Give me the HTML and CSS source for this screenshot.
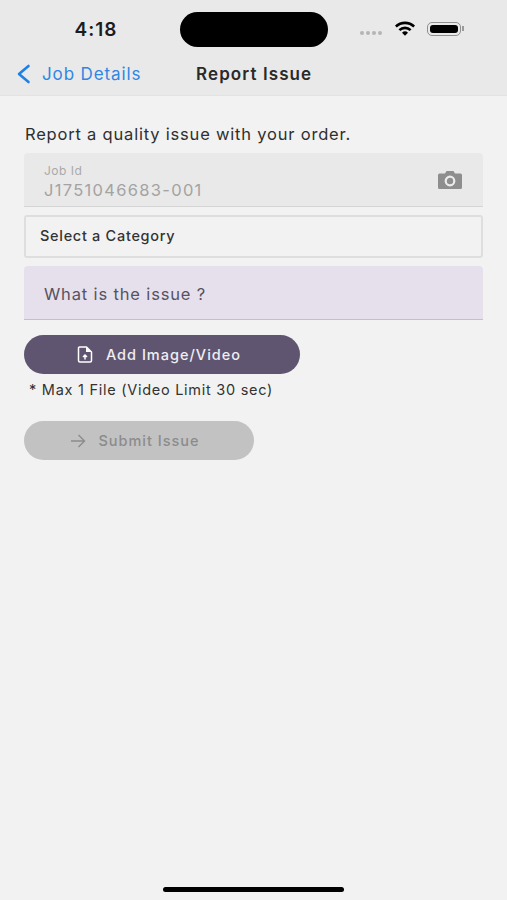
FILE: index.html
```html
<!DOCTYPE html>
<html lang="en">
<head>
    <meta charset="UTF-8">
    <meta name="viewport" content="width=device-width, initial-scale=1.0">
    <title>Report Issue</title>
    <link rel="stylesheet" href="styles.css">
</head>
<body>
    <div class="page">
        <header class="top-bar">
            <div class="status-bar">
                <div class="status-time">4:18</div>
                <div class="island"></div>
                <div class="status-icons">
                    <div class="signal"><span></span><span></span><span></span><span></span></div>
                    <svg class="wifi" width="22" height="16" viewBox="0 0 22 16">
                        <path d="M1 5.6a14.4 14.4 0 0 1 20 0l-1.7 1.9a11.9 11.9 0 0 0-16.6 0z" fill="#000"/>
                        <path d="M4.5 9.2a9.4 9.4 0 0 1 13 0l-1.8 1.9a6.8 6.8 0 0 0-9.4 0z" fill="#000"/>
                        <path d="M8 12.7a4.3 4.3 0 0 1 6 0L11 15.8z" fill="#000"/>
                    </svg>
                    <div class="battery"><div class="battery-fill"></div></div>
                    <div class="battery-cap"></div>
                </div>
            </div>
            <nav class="nav-bar">
                <a class="back-link">
                    <svg width="15" height="20" viewBox="0 0 15 20">
                        <path d="M12.5 2 3 10l9.5 8" fill="none" stroke="#1f7fe6" stroke-width="2.6" stroke-linecap="round" stroke-linejoin="round"/>
                    </svg>
                    <span>Job Details</span>
                </a>
                <div class="nav-title">Report Issue</div>
            </nav>
        </header>

        <main class="content">
            <p class="intro">Report a quality issue with your order.</p>

            <div class="job-field">
                <div class="job-text">
                    <div class="job-label">Job Id</div>
                    <div class="job-value">J1751046683-001</div>
                </div>
                <svg class="camera" width="26" height="20" viewBox="0 0 26 20">
                    <path d="M2.5 3.5H8L9.5 1h7L18 3.5h5.500a1.500 1.500 0 0 1 1.500 1.500v12.500a1.500 1.500 0 0 1-1.500 1.500h-21A1.500 1.500 0 0 1 1 17.500V5a1.500 1.500 0 0 1 1.500-1.500z" fill="#8e8e8e"/>
                    <circle cx="13" cy="11" r="4.300" fill="none" stroke="#ececec" stroke-width="2.200"/>
                </svg>
            </div>

            <div class="select-field">Select a Category</div>

            <div class="issue-field">What is the issue ?</div>

            <button class="btn btn-add">
                <svg width="16" height="17" viewBox="0 0 16 17">
                    <path d="M2.500 1h7L14.500 6v8.500a1.500 1.500 0 0 1-1.500 1.500H3a1.500 1.500 0 0 1-1.500-1.500V2A1 1 0 0 1 2.500 1z" fill="none" stroke="#fff" stroke-width="1.500" stroke-linejoin="round"/>
                    <path d="M9 1v5h5.500z" fill="#fff"/>
                    <path d="M8 13.500V9.500M6 11l2-2 2 2" fill="none" stroke="#fff" stroke-width="1.500"/>
                </svg>
                <span>Add Image/Video</span>
            </button>

            <p class="file-note">* Max 1 File (Video Limit 30 sec)</p>

            <button class="btn btn-submit">
                <svg width="16" height="14" viewBox="0 0 16 14">
                    <path d="M1 7h13.500M8.500 1l6 6-6 6" fill="none" stroke="#8c8c8c" stroke-width="1.400"/>
                </svg>
                <span>Submit Issue</span>
            </button>
        </main>

        <div class="home-bar"></div>
    </div>
</body>
</html>
```

FILE: styles.css
```css
* {
    margin: 0;
    padding: 0;
    box-sizing: border-box;
    font-family: Inter, "Liberation Sans", sans-serif;
}

body {
    background: #f2f2f2;
}

.page {
    display: flex;
    flex-direction: column;
    height: 100vh;
}

/* Status + nav */
.top-bar {
    height: 96px;
    background: #e9e9e9;
    border-bottom: 1px solid #e2e2e2;
}

.status-bar {
    display: flex;
    align-items: center;
    height: 59px;
}

.status-time {
    width: 180px;
    padding-left: 12px;
    text-align: center;
    font-size: 19px;
    font-weight: 600;
    letter-spacing: 1px;
    color: #1c1c1c;
}

.island {
    width: 148px;
    height: 35px;
    border-radius: 18px;
    background: #000;
}

.status-icons {
    display: flex;
    align-items: center;
    margin-left: 32px;
}

.signal {
    display: flex;
    gap: 2px;
    margin-top: 6px;
    margin-right: 12px;
}

.signal span {
    width: 4px;
    height: 4px;
    border-radius: 50%;
    background: #b5b5b5;
}

.wifi {
    margin-right: 11px;
    margin-bottom: 3px;
}

.battery {
    width: 34px;
    height: 14px;
    margin-bottom: 2px;
    padding: 2px;
    border: 1.500px solid #8f8f8f;
    border-radius: 5px;
}

.battery-fill {
    height: 100%;
    border-radius: 3px;
    background: #000;
}

.battery-cap {
    width: 2px;
    height: 5px;
    margin-left: 1px;
    margin-bottom: 2px;
    background: #9a9a9a;
}

.nav-bar {
    display: flex;
    align-items: center;
    height: 30px;
}

.back-link {
    display: flex;
    align-items: center;
    gap: 11px;
    width: 196px;
    padding-left: 16px;
    font-size: 17px;
    letter-spacing: 0.880px;
    color: #2f86e4;
}

.nav-title {
    font-size: 17px;
    font-weight: 600;
    letter-spacing: 1.100px;
    color: #2a2a2a;
}

/* Form */
.content {
    padding: 28px 24px 0;
}

.intro {
    height: 20px;
    margin-bottom: 9px;
    padding-left: 1px;
    font-size: 16.500px;
    line-height: 20px;
    letter-spacing: 0.800px;
    color: #2f2f2f;
}

.job-field {
    display: flex;
    align-items: center;
    justify-content: space-between;
    height: 54px;
    padding: 0 20px;
    border-bottom: 1px solid #d5d5d5;
    border-radius: 4px 4px 0 0;
    background: #e9e9e9;
}

.job-text {
    padding-top: 6px;
}

.job-label {
    font-size: 12px;
    line-height: 15px;
    letter-spacing: 0.500px;
    color: #a9a9a9;
}

.job-value {
    margin-top: 1px;
    font-size: 16.500px;
    line-height: 23px;
    letter-spacing: 1.300px;
    color: #a3a3a3;
}

.select-field {
    display: flex;
    align-items: center;
    height: 43px;
    margin-top: 8px;
    padding: 0 0 2px 14px;
    border: 2px solid #dedede;
    border-radius: 3px;
    font-size: 14.500px;
    font-weight: 500;
    letter-spacing: 0.700px;
    color: #333;
}

.issue-field {
    display: flex;
    align-items: center;
    height: 54px;
    margin-top: 8px;
    padding: 3px 0 0 20px;
    border-bottom: 1.500px solid #c3c0c8;
    border-radius: 4px 4px 0 0;
    background: #e6e0ec;
    font-size: 16.500px;
    letter-spacing: 0.850px;
    color: #57535f;
}

.btn {
    display: flex;
    align-items: center;
    justify-content: center;
    height: 39px;
    border: none;
    border-radius: 20px;
    font-size: 14.500px;
    font-weight: 500;
    letter-spacing: 1px;
}

.btn-add {
    gap: 13px;
    width: 276px;
    margin-top: 15px;
    padding-right: 6px;
    background: #5f5571;
    color: #f0eef3;
}

.file-note {
    margin-top: 7px;
    padding-left: 5px;
    font-size: 14.500px;
    line-height: 18px;
    letter-spacing: 0.730px;
    color: #333;
}

.btn-submit {
    gap: 12px;
    width: 230px;
    margin-top: 22px;
    padding-right: 8px;
    background: #c2c2c2;
    color: #8c8c8c;
}

.home-bar {
    align-self: center;
    width: 181px;
    height: 5px;
    margin-top: auto;
    margin-bottom: 8px;
    border-radius: 3px;
    background: #000;
}
```
